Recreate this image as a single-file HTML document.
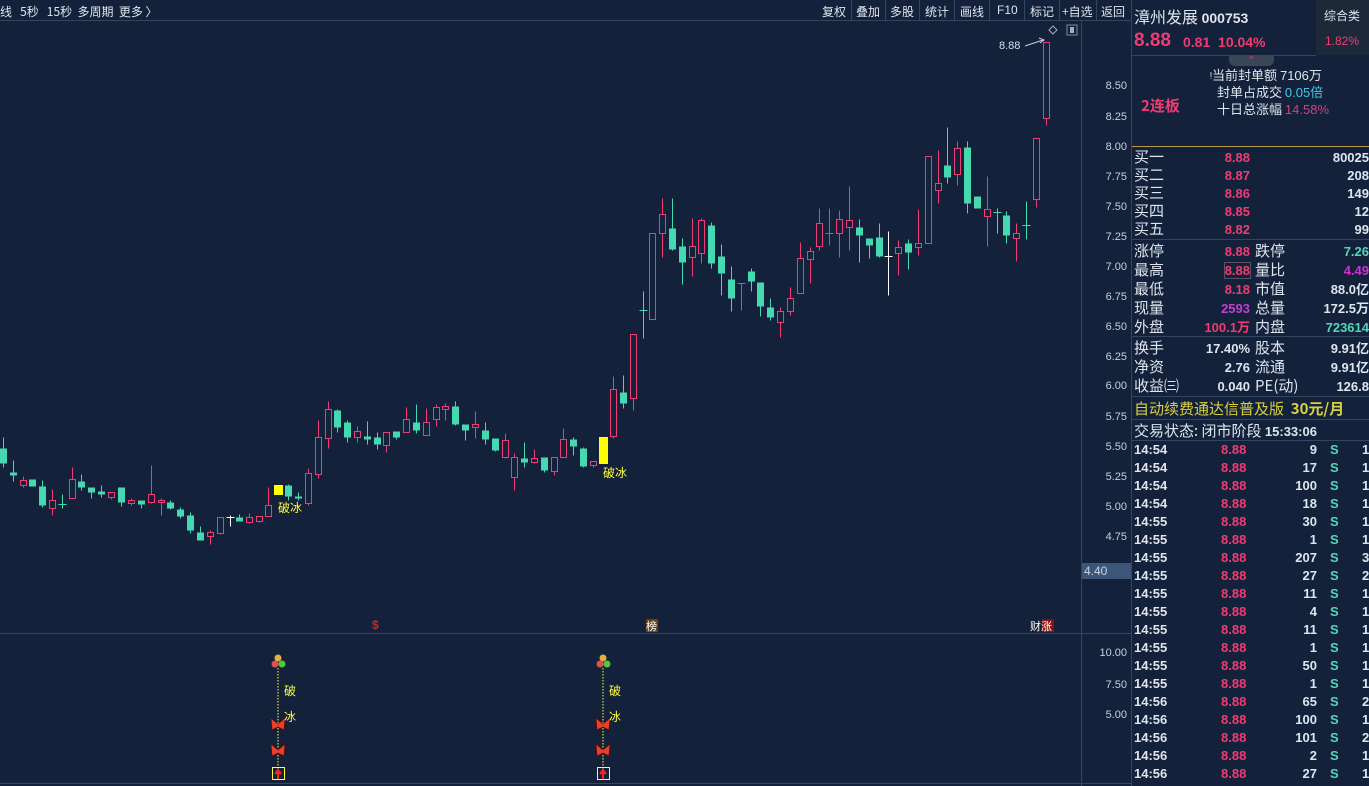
<!DOCTYPE html>
<html><head><meta charset="utf-8"><style>
body{margin:0;width:1369px;height:786px;background:#14213a;overflow:hidden;font-family:"Liberation Sans","Noto Sans CJK SC",sans-serif;color:#c8d0dc;position:relative}
.a{position:absolute;white-space:nowrap}
.cn{font-family:"Noto Sans CJK SC","WenQuanYi Zen Hei",sans-serif}
.rd{color:#f03c72}.gr{color:#4fd8b6}.wh{color:#dfe5ee}
.num{font-weight:bold;font-size:13px}
.lb{font-size:15px;line-height:18px;color:#dfe5ee}
.ax{font-size:11px;color:#c8d0dc;text-align:right;width:40px;left:1087px}
.tb{font-size:12px;color:#dfe5ee;top:3px}
.sep{position:absolute;top:0;height:20px;width:1px;background:#34455f}
.tk{position:absolute;left:1134px;width:235px;height:18px;font-weight:bold;font-size:13px}
.tk span{position:absolute;top:1px}
</style></head><body>
<div class="a tb cn" style="left:0">线&nbsp;&nbsp;&nbsp;5秒&nbsp;&nbsp;&nbsp;15秒&nbsp;&nbsp;多周期&nbsp;&nbsp;更多 〉</div>
<div class="a tb cn" style="left:822px">复权</div><div class="sep" style="left:851px"></div>
<div class="a tb cn" style="left:856px">叠加</div><div class="sep" style="left:885px"></div>
<div class="a tb cn" style="left:890px">多股</div><div class="sep" style="left:919px"></div>
<div class="a tb cn" style="left:925px">统计</div><div class="sep" style="left:954px"></div>
<div class="a tb cn" style="left:960px">画线</div><div class="sep" style="left:989px"></div>
<div class="a tb" style="left:997px">F10</div><div class="sep" style="left:1024px"></div>
<div class="a tb cn" style="left:1030px">标记</div><div class="sep" style="left:1059px"></div>
<div class="a tb cn" style="left:1062px">+自选</div><div class="sep" style="left:1096px"></div>
<div class="a tb cn" style="left:1101px">返回</div>
<div style="position:absolute;left:0;top:20px;width:1131px;height:1px;background:#34455f"></div>
<div style="position:absolute;left:1081px;top:20px;width:1px;height:766px;background:#34455f"></div>
<div style="position:absolute;left:1131px;top:0;width:1px;height:786px;background:#34455f"></div>
<div style="position:absolute;left:0;top:633px;width:1131px;height:1px;background:#34455f"></div>
<div style="position:absolute;left:0;top:783px;width:1131px;height:1px;background:#34455f"></div>

<svg style="position:absolute;left:0;top:0" width="1131" height="786" shape-rendering="crispEdges">
<style>.wr{stroke:#f03c72;stroke-width:1}.wg{stroke:#46d8b0;stroke-width:1}.r{fill:#14213a;stroke:#f03c72;stroke-width:1}.g{fill:#46d8b0}</style>
<g transform="translate(0.5,0.5)">
<line x1="3" y1="437" x2="3" y2="467" class="wg"/><rect x="-0.5" y="448" width="7" height="15" class="g"/>
<line x1="13" y1="460" x2="13" y2="481" class="wg"/><rect x="9.5" y="472" width="7" height="3" class="g"/>
<line x1="23" y1="476" x2="23" y2="487" class="wr"/><rect x="20" y="480" width="6" height="5" class="r"/>
<rect x="28.5" y="479" width="7" height="7" class="g"/>
<line x1="42" y1="480" x2="42" y2="507" class="wg"/><rect x="38.5" y="486" width="7" height="19" class="g"/>
<line x1="52" y1="489" x2="52" y2="515" class="wr"/><rect x="49" y="500" width="6" height="8" class="r"/>
<line x1="62" y1="494" x2="62" y2="508" class="wg"/><line x1="58" y1="504" x2="66" y2="504" class="wg"/>
<line x1="72" y1="467" x2="72" y2="498" class="wr"/><rect x="69" y="479" width="6" height="19" class="r"/>
<line x1="81" y1="474" x2="81" y2="490" class="wg"/><rect x="77.5" y="481" width="7" height="6" class="g"/>
<line x1="91" y1="487" x2="91" y2="498" class="wg"/><rect x="87.5" y="487" width="7" height="5" class="g"/>
<line x1="101" y1="485" x2="101" y2="497" class="wg"/><rect x="97.5" y="491" width="7" height="3" class="g"/>
<line x1="111" y1="492" x2="111" y2="499" class="wr"/><rect x="108" y="492" width="6" height="5" class="r"/>
<line x1="121" y1="487" x2="121" y2="506" class="wg"/><rect x="117.5" y="487" width="7" height="15" class="g"/>
<line x1="131" y1="498" x2="131" y2="505" class="wr"/><rect x="128" y="500" width="6" height="3" class="r"/>
<line x1="141" y1="500" x2="141" y2="508" class="wg"/><rect x="137.5" y="500" width="7" height="4" class="g"/>
<line x1="151" y1="465" x2="151" y2="503" class="wr"/><rect x="148" y="494" width="6" height="8" class="r"/>
<line x1="161" y1="498" x2="161" y2="515" class="wr"/><rect x="158" y="500" width="6" height="2" class="r"/>
<line x1="170" y1="500" x2="170" y2="509" class="wg"/><rect x="166.5" y="502" width="7" height="6" class="g"/>
<line x1="180" y1="507" x2="180" y2="518" class="wg"/><rect x="176.5" y="509" width="7" height="7" class="g"/>
<line x1="190" y1="512" x2="190" y2="533" class="wg"/><rect x="186.5" y="515" width="7" height="15" class="g"/>
<line x1="200" y1="526" x2="200" y2="540" class="wg"/><rect x="196.5" y="532" width="7" height="8" class="g"/>
<line x1="210" y1="530" x2="210" y2="544" class="wr"/><rect x="207" y="532" width="6" height="4" class="r"/>
<line x1="220" y1="517" x2="220" y2="534" class="wr"/><rect x="217" y="517" width="6" height="16" class="r"/>
<line x1="230" y1="515" x2="230" y2="526" stroke="#fff"/><line x1="226" y1="517" x2="234" y2="517" stroke="#fff"/>
<line x1="239" y1="514" x2="239" y2="521" class="wg"/><rect x="235.5" y="517" width="7" height="4" class="g"/>
<line x1="249" y1="513" x2="249" y2="523" class="wr"/><rect x="246" y="517" width="6" height="5" class="r"/>
<line x1="259" y1="516" x2="259" y2="522" class="wr"/><rect x="256" y="516" width="6" height="5" class="r"/>
<line x1="268" y1="487" x2="268" y2="516" class="wr"/><rect x="265" y="505" width="6" height="11" class="r"/>
<rect x="273.5" y="484.5" width="9" height="10" fill="#ffff00"/>
<line x1="288" y1="484" x2="288" y2="500" class="wg"/><rect x="284.5" y="485" width="7" height="11" class="g"/>
<line x1="298" y1="492" x2="298" y2="500" class="wg"/><rect x="294.5" y="496" width="7" height="2" class="g"/>
<line x1="308" y1="468" x2="308" y2="505" class="wr"/><rect x="305" y="473" width="6" height="30" class="r"/>
<line x1="318" y1="420" x2="318" y2="478" class="wr"/><rect x="315" y="437" width="6" height="37" class="r"/>
<line x1="328" y1="401" x2="328" y2="448" class="wr"/><rect x="325" y="409" width="6" height="29" class="r"/>
<line x1="337" y1="409" x2="337" y2="432" class="wg"/><rect x="333.5" y="410" width="7" height="17" class="g"/>
<line x1="347" y1="420" x2="347" y2="442" class="wg"/><rect x="343.5" y="422" width="7" height="15" class="g"/>
<line x1="357" y1="426" x2="357" y2="442" class="wr"/><rect x="354" y="431" width="6" height="6" class="r"/>
<line x1="367" y1="421" x2="367" y2="444" class="wg"/><rect x="363.5" y="436" width="7" height="3" class="g"/>
<line x1="377" y1="432" x2="377" y2="449" class="wg"/><rect x="373.5" y="437" width="7" height="7" class="g"/>
<line x1="386" y1="432" x2="386" y2="452" class="wr"/><rect x="383" y="432" width="6" height="13" class="r"/>
<line x1="396" y1="431" x2="396" y2="439" class="wg"/><rect x="392.5" y="431" width="7" height="6" class="g"/>
<line x1="406" y1="407" x2="406" y2="432" class="wr"/><rect x="403" y="419" width="6" height="13" class="r"/>
<line x1="416" y1="404" x2="416" y2="433" class="wg"/><rect x="412.5" y="422" width="7" height="8" class="g"/>
<line x1="426" y1="408" x2="426" y2="435" class="wr"/><rect x="423" y="422" width="6" height="13" class="r"/>
<line x1="436" y1="404" x2="436" y2="426" class="wr"/><rect x="433" y="407" width="6" height="12" class="r"/>
<line x1="445" y1="403" x2="445" y2="420" class="wr"/><rect x="442" y="406" width="6" height="3" class="r"/>
<line x1="455" y1="401" x2="455" y2="425" class="wg"/><rect x="451.5" y="406" width="7" height="18" class="g"/>
<line x1="465" y1="424" x2="465" y2="440" class="wg"/><rect x="461.5" y="424" width="7" height="6" class="g"/>
<line x1="475" y1="411" x2="475" y2="438" class="wr"/><rect x="472" y="424" width="6" height="3" class="r"/>
<line x1="485" y1="422" x2="485" y2="444" class="wg"/><rect x="481.5" y="430" width="7" height="9" class="g"/>
<line x1="495" y1="438" x2="495" y2="451" class="wg"/><rect x="491.5" y="438" width="7" height="12" class="g"/>
<line x1="505" y1="433" x2="505" y2="458" class="wr"/><rect x="502" y="440" width="6" height="17" class="r"/>
<line x1="514" y1="453" x2="514" y2="490" class="wr"/><rect x="511" y="457" width="6" height="20" class="r"/>
<line x1="524" y1="442" x2="524" y2="467" class="wg"/><rect x="520.5" y="458" width="7" height="4" class="g"/>
<line x1="534" y1="449" x2="534" y2="463" class="wr"/><rect x="531" y="458" width="6" height="4" class="r"/>
<line x1="544" y1="457" x2="544" y2="472" class="wg"/><rect x="540.5" y="457" width="7" height="13" class="g"/>
<line x1="554" y1="457" x2="554" y2="475" class="wr"/><rect x="551" y="457" width="6" height="14" class="r"/>
<line x1="563" y1="428" x2="563" y2="457" class="wr"/><rect x="560" y="439" width="6" height="18" class="r"/>
<line x1="573" y1="437" x2="573" y2="455" class="wg"/><rect x="569.5" y="439" width="7" height="7" class="g"/>
<line x1="583" y1="447" x2="583" y2="467" class="wg"/><rect x="579.5" y="448" width="7" height="18" class="g"/>
<line x1="593" y1="461" x2="593" y2="467" class="wr"/><rect x="590" y="461" width="6" height="4" class="r"/>
<rect x="598.5" y="436.5" width="9" height="27" fill="#ffff00"/>
<line x1="613" y1="376" x2="613" y2="438" class="wr"/><rect x="610" y="389" width="6" height="47" class="r"/>
<line x1="623" y1="375" x2="623" y2="408" class="wg"/><rect x="619.5" y="392" width="7" height="11" class="g"/>
<line x1="633" y1="334" x2="633" y2="410" class="wr"/><rect x="630" y="334" width="6" height="64" class="r"/>
<line x1="643" y1="291" x2="643" y2="338" class="wg"/><line x1="639" y1="310" x2="647" y2="310" class="wg" stroke-width="2"/>
<rect x="649" y="233" width="6" height="86" class="r"/>
<line x1="662" y1="198" x2="662" y2="257" class="wr"/><rect x="659" y="214" width="6" height="19" class="r"/>
<line x1="672" y1="198" x2="672" y2="250" class="wg"/><rect x="668.5" y="228" width="7" height="21" class="g"/>
<line x1="682" y1="238" x2="682" y2="284" class="wg"/><rect x="678.5" y="246" width="7" height="16" class="g"/>
<line x1="692" y1="218" x2="692" y2="276" class="wr"/><rect x="689" y="246" width="6" height="11" class="r"/>
<line x1="701" y1="218" x2="701" y2="263" class="wr"/><rect x="698" y="220" width="6" height="33" class="r"/>
<line x1="711" y1="222" x2="711" y2="268" class="wg"/><rect x="707.5" y="225" width="7" height="38" class="g"/>
<line x1="721" y1="244" x2="721" y2="295" class="wg"/><rect x="717.5" y="256" width="7" height="17" class="g"/>
<line x1="731" y1="266" x2="731" y2="311" class="wg"/><rect x="727.5" y="279" width="7" height="19" class="g"/>
<line x1="741" y1="283" x2="741" y2="310" class="wr"/><line x1="737" y1="283" x2="745" y2="283" class="wr" stroke-width="2"/>
<line x1="751" y1="268" x2="751" y2="291" class="wg"/><rect x="747.5" y="271" width="7" height="10" class="g"/>
<line x1="760" y1="282" x2="760" y2="316" class="wg"/><rect x="756.5" y="282" width="7" height="24" class="g"/>
<line x1="770" y1="298" x2="770" y2="320" class="wg"/><rect x="766.5" y="307" width="7" height="10" class="g"/>
<line x1="780" y1="307" x2="780" y2="337" class="wr"/><rect x="777" y="311" width="6" height="11" class="r"/>
<line x1="790" y1="287" x2="790" y2="315" class="wr"/><rect x="787" y="298" width="6" height="13" class="r"/>
<line x1="800" y1="242" x2="800" y2="293" class="wr"/><rect x="797" y="258" width="6" height="35" class="r"/>
<line x1="810" y1="247" x2="810" y2="283" class="wr"/><rect x="807" y="251" width="6" height="8" class="r"/>
<line x1="819" y1="208" x2="819" y2="250" class="wr"/><rect x="816" y="223" width="6" height="23" class="r"/>
<line x1="829" y1="208" x2="829" y2="245" class="wr"/><line x1="825" y1="233" x2="833" y2="233" class="wr" stroke-width="2"/>
<line x1="839" y1="210" x2="839" y2="257" class="wr"/><rect x="836" y="219" width="6" height="14" class="r"/>
<line x1="849" y1="186" x2="849" y2="250" class="wr"/><rect x="846" y="220" width="6" height="7" class="r"/>
<line x1="859" y1="219" x2="859" y2="262" class="wg"/><rect x="855.5" y="227" width="7" height="8" class="g"/>
<line x1="869" y1="238" x2="869" y2="258" class="wg"/><rect x="865.5" y="238" width="7" height="7" class="g"/>
<line x1="879" y1="223" x2="879" y2="257" class="wg"/><rect x="875.5" y="237" width="7" height="19" class="g"/>
<line x1="888" y1="231" x2="888" y2="295" stroke="#fff"/><line x1="884" y1="256" x2="892" y2="256" stroke="#fff"/>
<line x1="898" y1="240" x2="898" y2="275" class="wr"/><rect x="895" y="247" width="6" height="6" class="r"/>
<line x1="908" y1="239" x2="908" y2="269" class="wg"/><rect x="904.5" y="243" width="7" height="9" class="g"/>
<line x1="918" y1="209" x2="918" y2="255" class="wr"/><rect x="915" y="243" width="6" height="4" class="r"/>
<rect x="925" y="156" width="6" height="87" class="r"/>
<line x1="938" y1="150" x2="938" y2="203" class="wr"/><rect x="935" y="183" width="6" height="7" class="r"/>
<line x1="947" y1="127" x2="947" y2="183" class="wg"/><rect x="943.5" y="165" width="7" height="12" class="g"/>
<line x1="957" y1="141" x2="957" y2="185" class="wr"/><rect x="954" y="148" width="6" height="26" class="r"/>
<line x1="967" y1="141" x2="967" y2="213" class="wg"/><rect x="963.5" y="147" width="7" height="56" class="g"/>
<rect x="973.5" y="196" width="7" height="12" class="g"/>
<line x1="987" y1="176" x2="987" y2="246" class="wr"/><rect x="984" y="209" width="6" height="7" class="r"/>
<line x1="997" y1="208" x2="997" y2="233" class="wg"/><line x1="993" y1="212" x2="1001" y2="212" class="wg" stroke-width="2"/>
<line x1="1006" y1="211" x2="1006" y2="243" class="wg"/><rect x="1002.5" y="215" width="7" height="20" class="g"/>
<line x1="1016" y1="223" x2="1016" y2="261" class="wr"/><rect x="1013" y="233" width="6" height="5" class="r"/>
<line x1="1026" y1="201" x2="1026" y2="239" class="wg"/><line x1="1022" y1="225" x2="1030" y2="225" class="wg"/>
<line x1="1036" y1="138" x2="1036" y2="207" class="wr"/><rect x="1033" y="138" width="6" height="61" class="r"/>
<line x1="1046" y1="42" x2="1046" y2="125" class="wr"/><rect x="1043" y="42" width="6" height="76" class="r"/>
</g>
<line x1="1025" y1="46" x2="1043" y2="40" stroke="#ccd" stroke-width="1" shape-rendering="auto"/>
<path d="M1039 38 L1044 40 L1040 43" fill="none" stroke="#ccd" shape-rendering="auto"/>
<path d="M1053 26 L1057 30 L1053 34 L1049 30 Z" fill="none" stroke="#aab" shape-rendering="auto"/>
<rect x="1067" y="25" width="10" height="10" fill="none" stroke="#889"/><rect x="1070" y="27" width="4" height="6" fill="#aab"/>
<g shape-rendering="auto">
<line x1="278" y1="668" x2="278" y2="770" stroke="#ffff40" stroke-dasharray="1.5 1.5"/>
<line x1="603" y1="668" x2="603" y2="770" stroke="#ffff40" stroke-dasharray="1.5 1.5"/>
<circle cx="278" cy="658" r="3.5" fill="#e0b040"/><circle cx="275" cy="664" r="3.5" fill="#e05050"/><circle cx="282" cy="664" r="3.5" fill="#50c840"/>
<circle cx="603" cy="658" r="3.5" fill="#e0b040"/><circle cx="600" cy="664" r="3.5" fill="#e05050"/><circle cx="607" cy="664" r="3.5" fill="#50c840"/>
<g fill="#e8402a" stroke="#600" stroke-width="0.7">
<path d="M271 718 L278 724 L285 718 L284 730 L278 727 L272 730 Z"/>
<path d="M271 744 L278 750 L285 744 L284 756 L278 753 L272 756 Z"/>
<path d="M596 718 L603 724 L610 718 L609 730 L603 727 L597 730 Z"/>
<path d="M596 744 L603 750 L610 744 L609 756 L603 753 L597 756 Z"/>
</g>
<rect x="272.5" y="767.5" width="12" height="12" fill="none" stroke="#ffff40"/>
<rect x="597.5" y="767.5" width="12" height="12" fill="none" stroke="#ffff40"/>
<path d="M278 779 V772 M275 774 L278 770 L281 774" stroke="#ff2020" stroke-width="2" fill="#ff2020"/>
<path d="M603 779 V772 M600 774 L603 770 L606 774" stroke="#ff2020" stroke-width="2" fill="#ff2020"/>
</g>
<rect x="646" y="619" width="12" height="13" fill="#6a4018"/>
<rect x="1042" y="619" width="12" height="13" fill="#8a1010"/>
</svg>
<div class="a cn" style="left:278px;top:499px;font-size:12px;color:#ffff40">破冰</div>
<div class="a cn" style="left:603px;top:464px;font-size:12px;color:#ffff40">破冰</div>
<div class="a cn" style="left:284px;top:682px;font-size:12px;color:#ffff40">破</div>
<div class="a cn" style="left:284px;top:708px;font-size:12px;color:#ffff40">冰</div>
<div class="a cn" style="left:609px;top:682px;font-size:12px;color:#ffff40">破</div>
<div class="a cn" style="left:609px;top:708px;font-size:12px;color:#ffff40">冰</div>
<div class="a" style="left:372px;top:618px;font-size:12px;color:#e02020;font-weight:bold">$</div>
<div class="a cn" style="left:646px;top:618px;font-size:11px;color:#fff">榜</div>
<div class="a cn" style="left:1030px;top:618px;font-size:11px;color:#fff">财涨</div>
<div class="a" style="left:999px;top:40px;font-size:11px;color:#dde">8.88</div>
<div class="a ax" style="top:80px">8.50</div><div class="a ax" style="top:111px">8.25</div>
<div class="a ax" style="top:141px">8.00</div><div class="a ax" style="top:171px">7.75</div>
<div class="a ax" style="top:201px">7.50</div><div class="a ax" style="top:231px">7.25</div>
<div class="a ax" style="top:261px">7.00</div><div class="a ax" style="top:291px">6.75</div>
<div class="a ax" style="top:321px">6.50</div><div class="a ax" style="top:351px">6.25</div>
<div class="a ax" style="top:380px">6.00</div><div class="a ax" style="top:411px">5.75</div>
<div class="a ax" style="top:441px">5.50</div><div class="a ax" style="top:471px">5.25</div>
<div class="a ax" style="top:501px">5.00</div><div class="a ax" style="top:531px">4.75</div>
<div class="a" style="left:1082px;top:563px;width:49px;height:16px;background:#3c5578;color:#c8d4e4;font-size:12px;line-height:16px;padding-left:2px;box-sizing:border-box">4.40</div>
<div class="a ax" style="top:647px">10.00</div><div class="a ax" style="top:679px">7.50</div><div class="a ax" style="top:709px">5.00</div>
<div class="a cn" style="left:1134px;top:4px;font-size:16px;color:#dfe5ee">漳州发展 <span style="font-family:'Liberation Sans';font-size:14px;font-weight:bold">000753</span></div>
<div class="a" style="left:1316px;top:0;width:53px;height:55px;background:#1d2838"></div>
<div class="a cn" style="left:1324px;top:7px;font-size:12px;color:#dfe5ee">综合类</div>
<div class="a rd" style="left:1325px;top:34px;font-size:12px">1.82%</div>
<div class="a rd" style="left:1134px;top:30px;font-size:19px;font-weight:bold">8.88</div>
<div class="a rd" style="left:1183px;top:34px;font-size:14px;font-weight:bold">0.81&nbsp;&nbsp;10.04%</div>
<div class="a" style="left:1132px;top:55px;width:184px;height:1px;background:#34455f"></div>
<div class="a" style="left:1229px;top:55px;width:45px;height:11px;background:#3a4656;border-radius:0 0 6px 6px;color:#e04060;font-size:9px;text-align:center;line-height:9px">^</div>
<div class="a cn" style="left:1210px;top:65px;font-size:13px;color:#dfe5ee">ᵎ当前封单额 <span style="font-family:'Liberation Sans'">7106万</span></div>
<div class="a cn" style="left:1217px;top:82px;font-size:13px;color:#dfe5ee">封单占成交 <span style="color:#3fc8e8;font-family:'Liberation Sans'">0.05倍</span></div>
<div class="a cn" style="left:1217px;top:99px;font-size:13px;color:#dfe5ee">十日总涨幅 <span style="color:#d04080;font-family:'Liberation Sans'">14.58%</span></div>
<div class="a cn rd" style="left:1141px;top:95px;font-size:15px;font-weight:bold">2连板</div>
<div class="a" style="left:1132px;top:146px;width:237px;height:1px;background:#b89a4a"></div>
<div class="a lb cn" style="left:1134px;top:148px">买一<br>买二<br>买三<br>买四<br>买五</div>
<div class="a num rd" style="left:1200px;top:149px;width:50px;text-align:right;line-height:18px">8.88<br>8.87<br>8.86<br>8.85<br>8.82</div>
<div class="a num wh" style="left:1300px;top:149px;width:69px;text-align:right;line-height:18px;overflow:hidden">80025<br>208<br>149<br>12<br>99</div>
<div class="a" style="left:1132px;top:239px;width:237px;height:1px;background:#34455f"></div>
<div class="a lb cn" style="left:1134px;top:241px;line-height:19px">涨停<br>最高<br>最低<br>现量<br>外盘</div>
<div class="a num" style="left:1190px;top:242px;width:60px;text-align:right;line-height:19px"><span class="rd">8.88</span><br><span class="rd" style="outline:1px solid #556">8.88</span><br><span class="rd">8.18</span><br><span style="color:#c040d0">2593</span><br><span class="rd">100.1万</span></div>
<div class="a lb cn" style="left:1255px;top:241px;line-height:19px">跌停<br>量比<br>市值<br>总量<br>内盘</div>
<div class="a num" style="left:1290px;top:242px;width:79px;text-align:right;line-height:19px;overflow:hidden"><span class="gr">7.26</span><br><span style="color:#d030d0">4.49</span><br><span class="wh">88.0亿</span><br><span class="wh">172.5万</span><br><span class="gr">723614</span></div>
<div class="a" style="left:1132px;top:336px;width:237px;height:1px;background:#34455f"></div>
<div class="a lb cn" style="left:1134px;top:338px;line-height:19px">换手<br>净资<br>收益㈢</div>
<div class="a num wh" style="left:1190px;top:339px;width:60px;text-align:right;line-height:19px">17.40%<br>2.76<br>0.040</div>
<div class="a lb cn" style="left:1255px;top:338px;line-height:19px">股本<br>流通<br>PE(动)</div>
<div class="a num wh" style="left:1300px;top:339px;width:69px;text-align:right;line-height:19px;overflow:hidden">9.91亿<br>9.91亿<br>126.8</div>
<div class="a" style="left:1132px;top:396px;width:237px;height:1px;background:#34455f"></div>
<div class="a cn" style="left:1134px;top:398px;font-size:15px;color:#d8d040">自动续费通达信普及版&nbsp; <b>30元/月</b></div>
<div class="a" style="left:1132px;top:419px;width:237px;height:1px;background:#34455f"></div>
<div class="a cn" style="left:1134px;top:420px;font-size:15px;color:#dfe5ee">交易状态: 闭市阶段 <b style="font-family:'Liberation Sans';font-size:13px">15:33:06</b></div>
<div class="a" style="left:1132px;top:440px;width:237px;height:1px;background:#34455f"></div>
<div class="tk" style="top:441px"><span class="wh">14:54</span><span class="rd" style="left:87px">8.88</span><span class="wh" style="right:52px">9</span><span class="gr" style="left:196px">S</span><span class="wh" style="left:228px">1</span></div>
<div class="tk" style="top:459px"><span class="wh">14:54</span><span class="rd" style="left:87px">8.88</span><span class="wh" style="right:52px">17</span><span class="gr" style="left:196px">S</span><span class="wh" style="left:228px">1</span></div>
<div class="tk" style="top:477px"><span class="wh">14:54</span><span class="rd" style="left:87px">8.88</span><span class="wh" style="right:52px">100</span><span class="gr" style="left:196px">S</span><span class="wh" style="left:228px">1</span></div>
<div class="tk" style="top:495px"><span class="wh">14:54</span><span class="rd" style="left:87px">8.88</span><span class="wh" style="right:52px">18</span><span class="gr" style="left:196px">S</span><span class="wh" style="left:228px">1</span></div>
<div class="tk" style="top:513px"><span class="wh">14:55</span><span class="rd" style="left:87px">8.88</span><span class="wh" style="right:52px">30</span><span class="gr" style="left:196px">S</span><span class="wh" style="left:228px">1</span></div>
<div class="tk" style="top:531px"><span class="wh">14:55</span><span class="rd" style="left:87px">8.88</span><span class="wh" style="right:52px">1</span><span class="gr" style="left:196px">S</span><span class="wh" style="left:228px">1</span></div>
<div class="tk" style="top:549px"><span class="wh">14:55</span><span class="rd" style="left:87px">8.88</span><span class="wh" style="right:52px">207</span><span class="gr" style="left:196px">S</span><span class="wh" style="left:228px">3</span></div>
<div class="tk" style="top:567px"><span class="wh">14:55</span><span class="rd" style="left:87px">8.88</span><span class="wh" style="right:52px">27</span><span class="gr" style="left:196px">S</span><span class="wh" style="left:228px">2</span></div>
<div class="tk" style="top:585px"><span class="wh">14:55</span><span class="rd" style="left:87px">8.88</span><span class="wh" style="right:52px">11</span><span class="gr" style="left:196px">S</span><span class="wh" style="left:228px">1</span></div>
<div class="tk" style="top:603px"><span class="wh">14:55</span><span class="rd" style="left:87px">8.88</span><span class="wh" style="right:52px">4</span><span class="gr" style="left:196px">S</span><span class="wh" style="left:228px">1</span></div>
<div class="tk" style="top:621px"><span class="wh">14:55</span><span class="rd" style="left:87px">8.88</span><span class="wh" style="right:52px">11</span><span class="gr" style="left:196px">S</span><span class="wh" style="left:228px">1</span></div>
<div class="tk" style="top:639px"><span class="wh">14:55</span><span class="rd" style="left:87px">8.88</span><span class="wh" style="right:52px">1</span><span class="gr" style="left:196px">S</span><span class="wh" style="left:228px">1</span></div>
<div class="tk" style="top:657px"><span class="wh">14:55</span><span class="rd" style="left:87px">8.88</span><span class="wh" style="right:52px">50</span><span class="gr" style="left:196px">S</span><span class="wh" style="left:228px">1</span></div>
<div class="tk" style="top:675px"><span class="wh">14:55</span><span class="rd" style="left:87px">8.88</span><span class="wh" style="right:52px">1</span><span class="gr" style="left:196px">S</span><span class="wh" style="left:228px">1</span></div>
<div class="tk" style="top:693px"><span class="wh">14:56</span><span class="rd" style="left:87px">8.88</span><span class="wh" style="right:52px">65</span><span class="gr" style="left:196px">S</span><span class="wh" style="left:228px">2</span></div>
<div class="tk" style="top:711px"><span class="wh">14:56</span><span class="rd" style="left:87px">8.88</span><span class="wh" style="right:52px">100</span><span class="gr" style="left:196px">S</span><span class="wh" style="left:228px">1</span></div>
<div class="tk" style="top:729px"><span class="wh">14:56</span><span class="rd" style="left:87px">8.88</span><span class="wh" style="right:52px">101</span><span class="gr" style="left:196px">S</span><span class="wh" style="left:228px">2</span></div>
<div class="tk" style="top:747px"><span class="wh">14:56</span><span class="rd" style="left:87px">8.88</span><span class="wh" style="right:52px">2</span><span class="gr" style="left:196px">S</span><span class="wh" style="left:228px">1</span></div>
<div class="tk" style="top:765px"><span class="wh">14:56</span><span class="rd" style="left:87px">8.88</span><span class="wh" style="right:52px">27</span><span class="gr" style="left:196px">S</span><span class="wh" style="left:228px">1</span></div>
</body></html>
